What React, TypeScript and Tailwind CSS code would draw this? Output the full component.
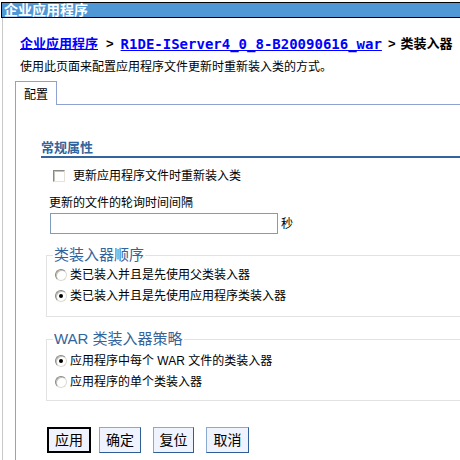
import React from "react";

function Checkbox() {
  return (
    <span className="block w-[12px] h-[12px] border border-t-[#8a8a82] border-l-[#8a8a82] border-r-[#e4e2da] border-b-[#e4e2da] bg-white shadow-[inset_1px_1px_0_#c4c2ba]" />
  );
}

function Radio({ checked }: { checked?: boolean }) {
  return (
    <span className="flex items-center justify-center w-[12px] h-[12px] rounded-full border border-t-[#8a8a82] border-l-[#8a8a82] border-r-[#dcdad2] border-b-[#dcdad2] bg-white shadow-[inset_1px_1px_0_#c4c2ba]">
      {checked ? <span className="block w-[4px] h-[4px] rounded-full bg-black" /> : null}
    </span>
  );
}

function Row({ checked, label }: { checked?: boolean; label: string }) {
  return (
    <div className="h-[21px] flex items-center pl-[8px]">
      <Radio checked={checked} />
      <span className="ml-[3px] text-[12px] leading-[14px] whitespace-nowrap">{label}</span>
    </div>
  );
}

export default function App() {
  return (
    <div className="w-[460px] h-[460px] overflow-hidden bg-white flex flex-col font-['Liberation_Sans','Noto_Sans_CJK_SC',sans-serif] text-black">
      <div className="mt-[2px] ml-[1px] h-[16px] bg-[#5097d6] border-t border-b border-l border-black flex items-center pl-[2px] text-white font-bold text-[14px] leading-[14px] whitespace-nowrap">
        企业应用程序
      </div>
      <div className="ml-[2px] flex-1 border-l border-[#c8c8c8] flex flex-col">
        <div className="mt-[18px] ml-[17px] h-[16px] text-[13px] leading-[16px] font-bold flex items-center whitespace-nowrap">
          <a className="text-[#0000ff] underline">企业应用程序</a>
          <span className="ml-[8px]">&gt;</span>
          <a className="ml-[7px] text-[#0000ff] underline font-['DejaVu_Sans_Mono',monospace] text-[14px]">
            R1DE-IServer4_0_8-B20090616_war
          </a>
          <span className="ml-[6px]">&gt;</span>
          <span className="ml-[5px]">类装入器</span>
        </div>
        <div className="mt-[7px] ml-[17px] text-[12px] leading-[16px] whitespace-nowrap">
          使用此页面来配置应用程序文件更新时重新装入类的方式。
        </div>
        <div className="mt-[6px] ml-[12px] flex h-[24px]">
          <div className="w-[42px] h-[24px] border-t border-l border-r border-[#8da2d0] flex items-center justify-center pt-[2px] text-[12px] leading-[14px]">
            配置
          </div>
          <div className="flex-1 border-b border-[#8da2d0]" />
        </div>
        <div className="ml-[12px] flex-1 border-l border-[#8da2d0] flex flex-col">
          <div className="mt-[35px] ml-[25px] h-[18px] border-b-2 border-[#33659c] text-[13px] leading-[16px] font-bold text-[#33659c] whitespace-nowrap">
            常规属性
          </div>
          <div className="mt-[12px] ml-[37px] h-[12px] flex items-center">
            <Checkbox />
            <span className="ml-[8px] text-[12px] leading-[14px] whitespace-nowrap">更新应用程序文件时重新装入类</span>
          </div>
          <div className="mt-[13px] ml-[33px] h-[16px] text-[12px] leading-[16px] whitespace-nowrap">
            更新的文件的轮询时间间隔
          </div>
          <div className="mt-[2px] ml-[34px] flex items-center">
            <input className="w-[228px] h-[21px] border border-[#7f9db9] bg-white outline-none" />
            <span className="ml-[3px] text-[12px] leading-[14px]">秒</span>
          </div>
          <fieldset className="mt-[12px] ml-[30px] mr-[-20px] border border-[#e2e2e2] pb-[10px]">
            <legend className="ml-[6px] px-[1px] text-[15px] leading-[18px] text-[#33659c] whitespace-nowrap">类装入器顺序</legend>
            <Row label="类已装入并且是先使用父类装入器" />
            <Row checked label="类已装入并且是先使用应用程序类装入器" />
          </fieldset>
          <fieldset className="mt-[13px] ml-[30px] mr-[-20px] border border-[#e2e2e2] pt-[2px] pb-[8px]">
            <legend className="ml-[6px] px-[1px] text-[15px] leading-[18px] text-[#33659c] whitespace-nowrap">WAR 类装入器策略</legend>
            <Row checked label="应用程序中每个 WAR 文件的类装入器" />
            <Row label="应用程序的单个类装入器" />
          </fieldset>
          <div className="mt-[26px] ml-[31px] flex">
            <button className="w-[44px] h-[26px] border-2 border-black bg-[#eef3fd] text-[14px] leading-[16px] flex items-center justify-center">应用</button>
            <button className="ml-[8px] w-[42px] h-[26px] border border-t-[#8ba8d0] border-l-[#8ba8d0] border-r-[#2f5e96] border-b-[#2f5e96] bg-[#eef3fd] text-[14px] leading-[16px] flex items-center justify-center">确定</button>
            <button className="ml-[12px] w-[41px] h-[26px] border border-t-[#8ba8d0] border-l-[#8ba8d0] border-r-[#2f5e96] border-b-[#2f5e96] bg-[#eef3fd] text-[14px] leading-[16px] flex items-center justify-center">复位</button>
            <button className="ml-[12px] w-[43px] h-[26px] border border-t-[#8ba8d0] border-l-[#8ba8d0] border-r-[#2f5e96] border-b-[#2f5e96] bg-[#eef3fd] text-[14px] leading-[16px] flex items-center justify-center">取消</button>
          </div>
        </div>
      </div>
    </div>
  );
}
